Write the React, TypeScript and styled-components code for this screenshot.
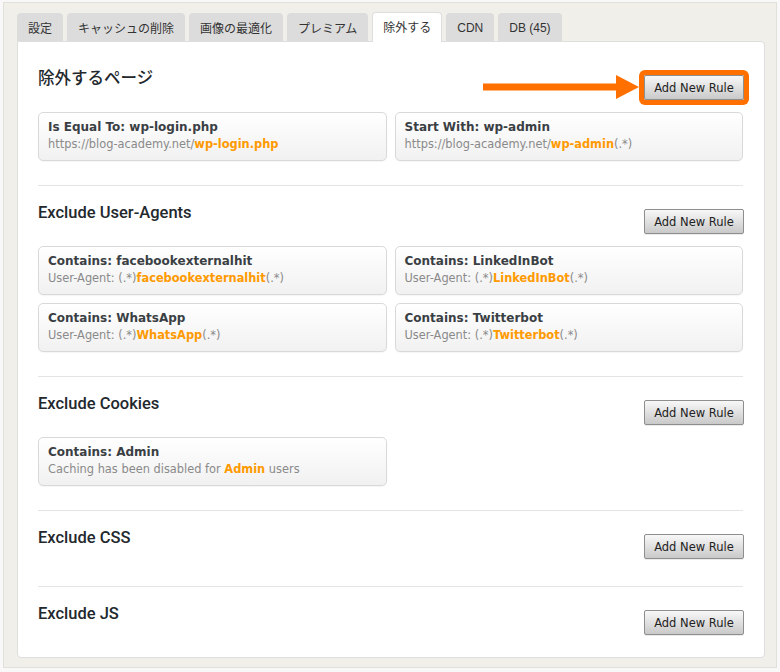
import styled, { createGlobalStyle } from "styled-components";

const GlobalStyle = createGlobalStyle`
  body {
    margin: 0;
    background: #f8f8f8;
    font-family: "Liberation Sans", "Noto Sans CJK JP", sans-serif;
  }
`;

const Frame = styled.div`
  margin: 2px 3px 4px 3px;
  border: 1px solid #e2e0db;
  background: #f1efea;
  padding: 8px 11px 9px 13px;
`;

const TabBar = styled.div`
  display: flex;
  align-items: flex-end;
  gap: 4px;
  height: 30px;
`;

const Tab = styled.div<{ $active?: boolean }>`
  box-sizing: border-box;
  height: ${(p) => (p.$active ? "30px" : "28px")};
  padding: 0 10px;
  display: flex;
  align-items: center;
  font-family: "Liberation Sans", "Noto Sans CJK JP", sans-serif;
  font-size: 12px;
  color: #333;
  background: ${(p) => (p.$active ? "#fff" : "#dcdcdc")};
  border: 1px solid ${(p) => (p.$active ? "#dedede" : "#dcdcdc")};
  border-bottom: none;
  border-radius: 4px 4px 0 0;
  margin-bottom: ${(p) => (p.$active ? "-1px" : "0")};
  padding-bottom: ${(p) => (p.$active ? "2px" : "0")};
  position: relative;
  z-index: ${(p) => (p.$active ? 1 : 0)};
`;

const Panel = styled.div`
  background: #fff;
  border: 1px solid #dedede;
  border-radius: 0 4px 4px 4px;
  padding: 10px 20px 0 20px;
`;

const Section = styled.section<{ $last?: boolean; $empty?: boolean }>`
  padding: 23px 0 ${(p) => (p.$last ? "22px" : p.$empty ? "27px" : "24px")};
  border-bottom: ${(p) => (p.$last ? "none" : "1px solid #e4e4e4")};
  margin-right: 1px;
`;

const Header = styled.div`
  position: relative;
  display: flex;
  justify-content: space-between;
  align-items: flex-start;
  height: 25px;
  margin-right: -1px;
`;

const Heading = styled.h2`
  margin: -6px 0 0;
  font-family: Roboto, "Noto Sans CJK JP", sans-serif;
  font-size: 16.5px;
  line-height: 20px;
  font-weight: 500;
  color: #23282d;
`;

const AddButton = styled.button<{ $highlight?: boolean }>`
  box-sizing: border-box;
  width: 100px;
  height: 25px;
  padding: 0;
  font-family: "DejaVu Sans", sans-serif;
  font-size: 11.5px;
  color: #222;
  background: linear-gradient(#f8f8f8, #c9c9c9);
  border: 1px solid #8e8e8e;
  border-radius: 2px;
  box-shadow: ${(p) => (p.$highlight ? "0 0 0 5px #ff7000" : "0 1px 0 rgba(0, 0, 0, 0.08)")};
`;

const Arrow = styled.svg`
  position: absolute;
  right: 105px;
  top: 0;
`;

const Cards = styled.div`
  display: grid;
  grid-template-columns: 1fr 1fr;
  gap: 8px;
  margin-top: 12px;
`;

const Card = styled.div`
  box-sizing: border-box;
  height: 49px;
  padding: 6px 9px 0;
  border: 1px solid #d9d9d9;
  border-radius: 5px;
  background: linear-gradient(#fff, #f1f1f1);
  box-shadow: 0 1px 1px rgba(0, 0, 0, 0.04);
  font-family: "DejaVu Sans", sans-serif;
`;

const Title = styled.div`
  font-size: 12px;
  line-height: 17px;
  font-weight: bold;
  color: #3a3f44;
`;

const Sub = styled.div`
  font-size: 11.4px;
  line-height: 17px;
  color: #8a8a8a;
`;

const Hit = styled.span`
  color: #ff9a00;
  font-weight: bold;
`;

type Rule = { title: string; before: string; hit: string; after: string };

const sections: { name: string; rules: Rule[] }[] = [
  {
    name: "除外するページ",
    rules: [
      { title: "Is Equal To: wp-login.php", before: "https://blog-academy.net/", hit: "wp-login.php", after: "" },
      { title: "Start With: wp-admin", before: "https://blog-academy.net/", hit: "wp-admin", after: "(.*)" },
    ],
  },
  {
    name: "Exclude User-Agents",
    rules: [
      { title: "Contains: facebookexternalhit", before: "User-Agent: (.*)", hit: "facebookexternalhit", after: "(.*)" },
      { title: "Contains: LinkedInBot", before: "User-Agent: (.*)", hit: "LinkedInBot", after: "(.*)" },
      { title: "Contains: WhatsApp", before: "User-Agent: (.*)", hit: "WhatsApp", after: "(.*)" },
      { title: "Contains: Twitterbot", before: "User-Agent: (.*)", hit: "Twitterbot", after: "(.*)" },
    ],
  },
  {
    name: "Exclude Cookies",
    rules: [
      { title: "Contains: Admin", before: "Caching has been disabled for ", hit: "Admin", after: " users" },
    ],
  },
  { name: "Exclude CSS", rules: [] },
  { name: "Exclude JS", rules: [] },
];

const tabs = ["設定", "キャッシュの削除", "画像の最適化", "プレミアム", "除外する", "CDN", "DB (45)"];

const App = () => {
  return (
    <>
      <GlobalStyle />
      <Frame>
        <TabBar>
          {tabs.map((t) => (
            <Tab key={t} $active={t === "除外する"}>
              {t}
            </Tab>
          ))}
        </TabBar>
        <Panel>
          {sections.map((s, i) => (
            <Section key={s.name} $last={i === sections.length - 1} $empty={s.rules.length === 0}>
              <Header>
                <Heading>{s.name}</Heading>
                {i === 0 && (
                  <Arrow width="156" height="24" viewBox="0 0 156 24">
                    <rect x="0" y="8.5" width="135" height="7" fill="#ff7000" />
                    <polygon points="133,0 156,12 133,24" fill="#ff7000" />
                  </Arrow>
                )}
                <AddButton $highlight={i === 0}>Add New Rule</AddButton>
              </Header>
              {s.rules.length > 0 && (
                <Cards>
                  {s.rules.map((r) => (
                    <Card key={r.title}>
                      <Title>{r.title}</Title>
                      <Sub>
                        {r.before}
                        <Hit>{r.hit}</Hit>
                        {r.after}
                      </Sub>
                    </Card>
                  ))}
                </Cards>
              )}
            </Section>
          ))}
        </Panel>
      </Frame>
    </>
  );
};

export default App;
